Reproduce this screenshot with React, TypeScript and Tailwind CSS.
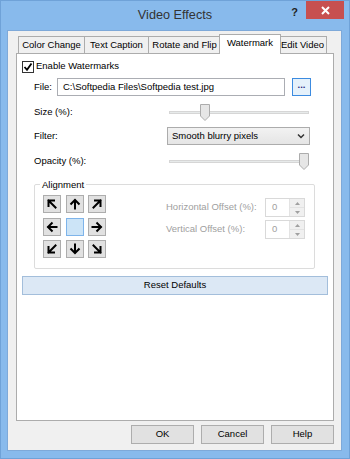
import React from "react";

const Arrow = ({ rot }: { rot: number }) => (
  <svg width="12" height="12" viewBox="0 0 12 12" style={{ transform: `rotate(${rot}deg)` }}>
    <path d="M6 10.5 V2.2 M2.2 5.8 L6 2 L9.8 5.8" fill="none" stroke="#000" strokeWidth="2" strokeLinecap="square" />
  </svg>
);

const DiagArrow = ({ rot }: { rot: number }) => (
  <svg width="12" height="12" viewBox="0 0 12 12" style={{ transform: `rotate(${rot}deg)` }}>
    <path d="M2.5 2.5 L9.5 9.5 M2.5 8 V2.5 H8" fill="none" stroke="#000" strokeWidth="2" strokeLinecap="square" />
  </svg>
);

const AlignBtn = ({ children, active }: { children?: React.ReactNode; active?: boolean }) => (
  <div
    className={
      active
        ? "w-[18px] h-[18px] bg-[#cce4f7] border border-[#7eb4ea] flex items-center justify-center"
        : "w-[18px] h-[18px] bg-[#e1e1e1] border border-[#adadad] flex items-center justify-center"
    }
  >
    {children}
  </div>
);

const Slider = ({ pos }: { pos: number }) => (
  <div className="relative w-[140px] h-[17px]">
    <div className="absolute left-0 right-0 top-[7px] h-[3px] bg-[#e7eaea] border border-[#d6d6d6]" />
    <svg className="absolute top-0" style={{ left: pos }} width="10" height="17" viewBox="0 0 10 17">
      <path d="M0.5 0.5 H9.5 V12 L5 16.5 L0.5 12 Z" fill="#e6e6e6" stroke="#acacac" />
    </svg>
  </div>
);

const Spin = () => (
  <div className="w-[40px] h-[19px] border border-[#d9d9d9] bg-white flex">
    <div className="flex-1 flex items-center pl-[6px] text-[#a0a0a0]">0</div>
    <div className="w-[15px] flex flex-col border-l border-[#e3e3e3]">
      <div className="flex-1 bg-[#f0f0f0] border-b border-[#e3e3e3] flex items-center justify-center">
        <svg width="5" height="3" viewBox="0 0 5 3"><path d="M0 3 L2.5 0 L5 3Z" fill="#a0a0a0" /></svg>
      </div>
      <div className="flex-1 bg-[#f0f0f0] flex items-center justify-center">
        <svg width="5" height="3" viewBox="0 0 5 3"><path d="M0 0 L2.5 3 L5 0Z" fill="#a0a0a0" /></svg>
      </div>
    </div>
  </div>
);

export default function App() {
  const tabBase = "h-[17px] flex items-center justify-center border-t border-l border-r border-[#acacac] bg-[#f0f0f0] text-[#000]";
  return (
    <div className="w-[350px] h-[459px] bg-[#88baec] border border-[#6fa2d8] flex flex-col font-['Liberation_Sans',Arial,sans-serif] text-[9.5px] text-black select-none">
      {/* Title bar */}
      <div className="h-[29px] grid grid-cols-[1fr_auto_1fr]">
        <div />
        <div className="pt-[5px] text-[12.7px] text-[#333]">Video Effects</div>
        <div className="flex justify-end items-start pr-[5px]">
          <div className="mt-[3px] mr-[8px] text-[11px] font-bold text-[#222]">?</div>
          <div className="w-[38px] h-[18px] bg-[#c75050] flex items-center justify-center">
            <svg width="9" height="9" viewBox="0 0 9 9">
              <path d="M1 1 L8 8 M8 1 L1 8" stroke="#fff" strokeWidth="2" />
            </svg>
          </div>
        </div>
      </div>

      {/* Client area */}
      <div className="ml-[6px] w-[335px] h-[421px] bg-[#f0f0f0] border border-[#7ea9d9] flex flex-col">
        {/* Tabs */}
        <div className="mt-[3px] h-[19px] pl-[10px] flex items-end">
          <div className={`${tabBase} w-[67px]`}>Color Change</div>
          <div className={`${tabBase} w-[64px] border-l-0`}>Text Caption</div>
          <div className={`${tabBase} w-[72px] border-l-0`}>Rotate and Flip</div>
          <div className="relative z-10 -mx-[2px] -mb-px w-[62px] h-[20px] bg-white border-t border-l border-r border-[#acacac] flex items-center justify-center pb-[2px]">
            Watermark
          </div>
          <div className={`${tabBase} w-[48px] border-l-0`}>Edit Video</div>
        </div>

        {/* Panel */}
        <div className="ml-[8px] w-[318px] h-[368px] bg-white border border-[#acacac] flex flex-col pl-[5px]">
          {/* Enable */}
          <div className="mt-[6px] h-[13px] flex items-center">
            <div className="w-[12px] h-[12px] border border-[#333] bg-white flex items-center justify-center">
              <svg width="10" height="10" viewBox="0 0 10 10">
                <path d="M1.5 5 L4 7.8 L8.5 1.5" fill="none" stroke="#000" strokeWidth="1.8" />
              </svg>
            </div>
            <span className="ml-[2px]">Enable Watermarks</span>
          </div>

          {/* File */}
          <div className="mt-[5px] h-[18px] flex items-center">
            <span className="ml-[12px] w-[23px]">File:</span>
            <div className="w-[228px] h-[18px] border border-[#abadb3] bg-white flex items-center pl-[5px]">
              C:\Softpedia Files\Softpedia test.jpg
            </div>
            <div className="ml-[7px] w-[19px] h-[18px] border border-[#3c8be0] bg-[#e5f1fb] flex items-center justify-center text-[#2a2a80] font-bold pb-[3px]">
              ...
            </div>
          </div>

          {/* Size */}
          <div className="mt-[8px] h-[17px] flex items-center">
            <span className="ml-[12px] w-[135px]">Size (%):</span>
            <Slider pos={31} />
          </div>

          {/* Filter */}
          <div className="mt-[6px] h-[18px] flex items-center">
            <span className="ml-[12px] w-[133px]">Filter:</span>
            <div className="w-[143px] h-[18px] border border-[#acacac] bg-gradient-to-b from-[#f2f2f2] to-[#e5e5e5] flex items-center justify-between pl-[4px] pr-[4px]">
              <span>Smooth blurry pixels</span>
              <svg width="8" height="6" viewBox="0 0 8 6">
                <path d="M1 1.5 L4 4.5 L7 1.5" fill="none" stroke="#333" strokeWidth="1.5" />
              </svg>
            </div>
          </div>

          {/* Opacity */}
          <div className="mt-[8px] h-[17px] flex items-center">
            <span className="ml-[12px] w-[135px]">Opacity (%):</span>
            <Slider pos={130} />
          </div>

          {/* Alignment group */}
          <div className="relative mt-[14px] ml-[12px] w-[281px] h-[85px] border border-[#dcdcdc] rounded-[2px] flex pt-[10px] pl-[8px]">
            <span className="absolute left-[5px] -top-[7px] bg-white px-[2px]">Alignment</span>
            <div className="grid grid-cols-[18px_18px_18px] gap-x-[4.5px] gap-y-[4.5px] content-start">
              <AlignBtn><DiagArrow rot={0} /></AlignBtn>
              <AlignBtn><Arrow rot={0} /></AlignBtn>
              <AlignBtn><DiagArrow rot={90} /></AlignBtn>
              <AlignBtn><Arrow rot={-90} /></AlignBtn>
              <AlignBtn active />
              <AlignBtn><Arrow rot={90} /></AlignBtn>
              <AlignBtn><DiagArrow rot={-90} /></AlignBtn>
              <AlignBtn><Arrow rot={180} /></AlignBtn>
              <AlignBtn><DiagArrow rot={180} /></AlignBtn>
            </div>
            <div className="ml-[60px] mt-[3px] flex flex-col gap-[3px] text-[#a0a0a0]">
              <div className="h-[19px] flex items-center">
                <span className="w-[99px]">Horizontal Offset (%):</span>
                <Spin />
              </div>
              <div className="h-[19px] flex items-center">
                <span className="w-[99px]">Vertical Offset (%):</span>
                <Spin />
              </div>
            </div>
          </div>

          {/* Reset */}
          <div className="mt-[7px] w-[306px] h-[19px] border border-[#a3bedb] bg-[#dce8f5] flex items-center justify-center">
            Reset Defaults
          </div>
        </div>

        {/* Buttons */}
        <div className="mt-[4px] flex justify-end gap-[7px] pr-[7px]">
          <div className="w-[63px] h-[19px] bg-[#e1e1e1] border border-[#adadad] flex items-center justify-center">OK</div>
          <div className="w-[63px] h-[19px] bg-[#e1e1e1] border border-[#adadad] flex items-center justify-center">Cancel</div>
          <div className="w-[63px] h-[19px] bg-[#e1e1e1] border border-[#adadad] flex items-center justify-center">Help</div>
        </div>
      </div>
    </div>
  );
}
